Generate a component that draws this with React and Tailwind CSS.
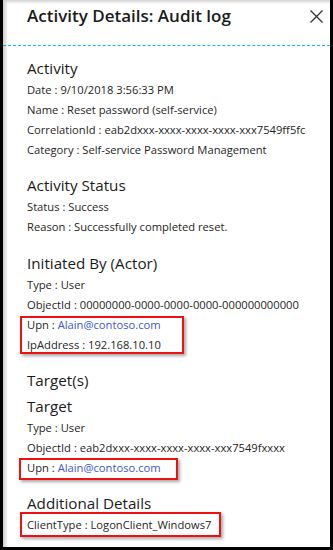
import React from "react";

const font = { fontFamily: '"Segoe UI", "Open Sans", "Noto Sans", sans-serif' };

function Row({ label, value, link }) {
  return (
    <div className="h-[20px] leading-[20px] text-[11.2px] text-[#252525] whitespace-nowrap">
      {label} : <span className={link ? "text-[#3b55d6]" : ""}>{value}</span>
    </div>
  );
}

function Heading({ children, className = "" }) {
  return (
    <div className={"h-[24px] leading-[24px] text-[15.2px] text-[#1b1b1b] " + className}>{children}</div>
  );
}

function Marked({ w, top, bottom, left, children }) {
  return (
    <div className="relative">
      {children}
      <span
        className={`pointer-events-none absolute border-2 border-[#ee1111] shadow-[2px_2px_3px_rgba(0,0,0,0.35)] ${w} ${top} ${bottom} ${left}`}
      />
    </div>
  );
}

export default function App() {
  return (
    <div className="w-[333px] h-[550px] bg-black pl-[3px] pr-[3px] pb-[3px]" style={font}>
      <div className="relative w-full h-full bg-white shadow-[inset_3px_2px_3px_rgba(0,0,0,0.18)] overflow-hidden">
        <div className="h-[45px] flex items-start justify-between pl-[24px] pr-[7px] pt-[3px]">
          <div className="text-[17px] font-semibold text-[#1b1b1b] leading-[26px]">
            Activity Details: Audit log
          </div>
          <svg width="13" height="13" viewBox="0 0 13 13" className="mt-[7px]">
            <path d="M0.5 0.5 L12.5 12.5 M12.5 0.5 L0.5 12.5" stroke="#333" strokeWidth="1.3" />
          </svg>
        </div>
        <div className="h-px w-full border-t border-dashed border-[#12b4ec]" />
        <div className="pl-[24px] pt-[10px]">
          <Heading>Activity</Heading>
          <Row label="Date" value="9/10/2018 3:56:33 PM" />
          <Row label="Name" value="Reset password (self-service)" />
          <Row label="CorrelationId" value="eab2dxxx-xxxx-xxxx-xxxx-xxx7549ff5fc" />
          <Row label="Category" value="Self-service Password Management" />

          <Heading className="mt-[13px]">Activity Status</Heading>
          <Row label="Status" value="Success" />
          <Row label="Reason" value="Successfully completed reset." />

          <Heading className="mt-[14px]">Initiated By (Actor)</Heading>
          <Row label="Type" value="User" />
          <Row label="ObjectId" value="00000000-0000-0000-0000-000000000000" />
          <Marked w="w-[164px]" top="top-px" bottom="bottom-px" left="-left-[7px]">
            <Row label="Upn" value="Alain@contoso.com" link />
            <Row label="IpAddress" value="192.168.10.10" />
          </Marked>

          <Heading className="mt-[13px]">Target(s)</Heading>
          <Heading className="mt-[2px]">Target</Heading>
          <Row label="Type" value="User" />
          <Row label="ObjectId" value="eab2dxxx-xxxx-xxxx-xxxx-xxx7549fxxxx" />
          <Marked w="w-[159px]" top="top-0" bottom="-bottom-[2px]" left="-left-[8px]">
            <Row label="Upn" value="Alain@contoso.com" link />
          </Marked>

          <Heading className="mt-[13px]">Additional Details</Heading>
          <Marked w="w-[201px]" top="-top-[3px]" bottom="bottom-[-2px]" left="-left-[7px]">
            <Row label="ClientType" value="LogonClient_Windows7" />
          </Marked>
        </div>
      </div>
    </div>
  );
}
